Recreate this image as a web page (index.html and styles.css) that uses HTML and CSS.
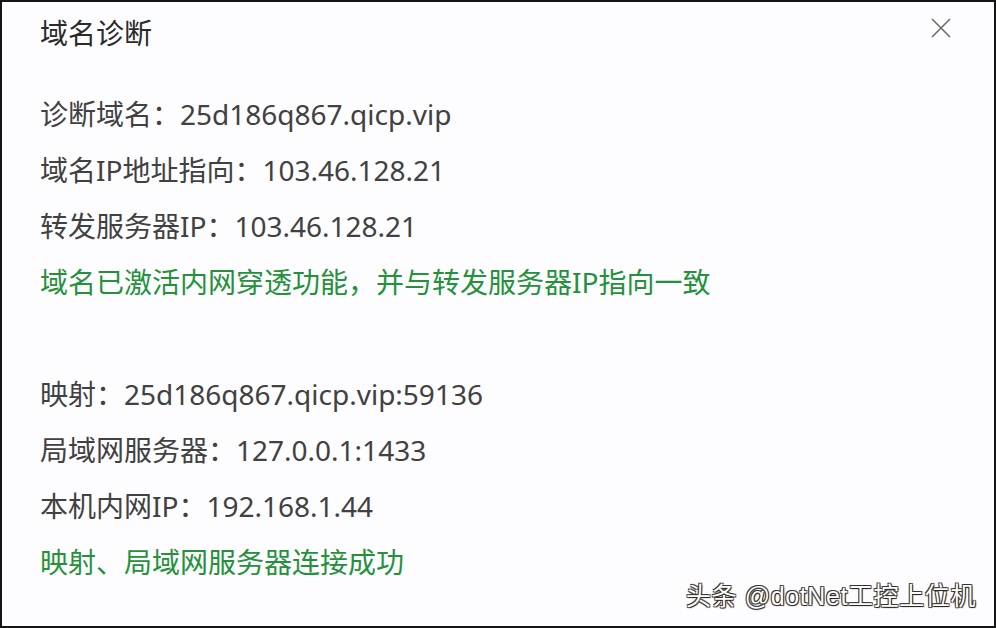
FILE: index.html
```html
<!DOCTYPE html>
<html lang="zh-CN">
<head>
<meta charset="utf-8">
<title>域名诊断</title>
<link rel="stylesheet" href="styles.css">
</head>
<body>
<div class="dialog">
  <div class="header">
    <div class="title">域名诊断</div>
    <button class="close" aria-label="关闭">
      <svg width="20" height="20" viewBox="0 0 20 20"><path d="M1 1L19 19M19 1L1 19" stroke="#6b6b6b" stroke-width="1.6" fill="none"/></svg>
    </button>
  </div>
  <div class="body">
    <div class="line">诊断域名：25d186q867.qicp.vip</div>
    <div class="line">域名IP地址指向：103.46.128.21</div>
    <div class="line">转发服务器IP：103.46.128.21</div>
    <div class="line ok">域名已激活内网穿透功能，并与转发服务器IP指向一致</div>
    <div class="line blank"></div>
    <div class="line">映射：25d186q867.qicp.vip:59136</div>
    <div class="line">局域网服务器：127.0.0.1:1433</div>
    <div class="line">本机内网IP：192.168.1.44</div>
    <div class="line ok">映射、局域网服务器连接成功</div>
  </div>
  <div class="watermark">头条 @dotNet工控上位机</div>
</div>
</body>
</html>
```

FILE: styles.css
```css
html, body {
  margin: 0;
  padding: 0;
  background: #fdfcfe;
}
.dialog {
  position: relative;
  box-sizing: border-box;
  width: 996px;
  height: 628px;
  border: 2px solid #151515;
  background: #fdfcfe;
  font-family: "Noto Sans", "Noto Sans CJK SC", sans-serif;
  color: #414141;
  overflow: hidden;
}
.header {
  display: flex;
  align-items: center;
  justify-content: space-between;
  height: 60px;
  padding: 0 41px 0 38px;
}
.title {
  font-size: 28px;
  color: #2a2a2a;
}
.close {
  display: flex;
  align-items: center;
  justify-content: center;
  border: 0;
  background: none;
  padding: 0;
  margin-top: -9px;
  width: 24px;
  height: 24px;
}
.body {
  padding: 24px 38px 0 38px;
}
.line {
  font-size: 28px;
  height: 56px;
  line-height: 56px;
  white-space: nowrap;
}
.ok {
  color: #24913b;
}
.watermark {
  position: absolute;
  right: 18px;
  bottom: 14px;
  font-family: "Liberation Sans", "Noto Sans CJK SC", sans-serif;
  font-size: 25px;
  letter-spacing: 0.6px;
  color: #ffffff;
  text-shadow: -1px -1px 0 #333, 1px 1px 1px #222, 1px -1px 0 #555, -1px 1px 0 #555;
}
```
